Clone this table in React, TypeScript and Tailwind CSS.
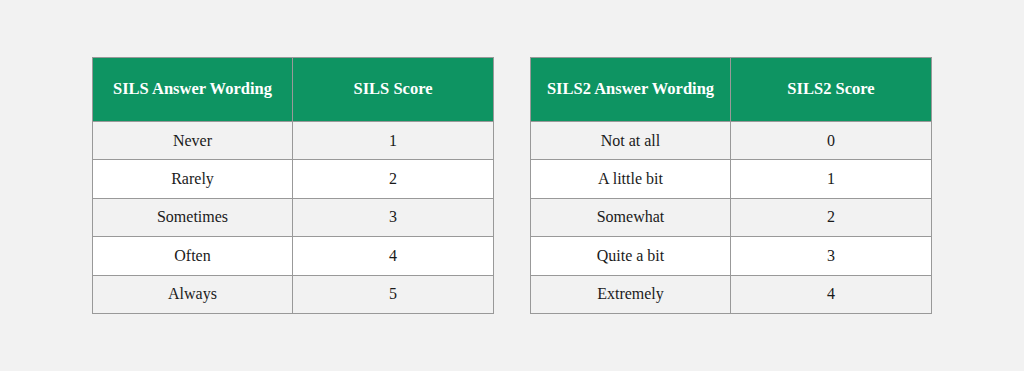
const TABLES = [
  {
    head: ["SILS Answer Wording", "SILS Score"],
    rows: [
      ["Never", "1"],
      ["Rarely", "2"],
      ["Sometimes", "3"],
      ["Often", "4"],
      ["Always", "5"],
    ],
  },
  {
    head: ["SILS2 Answer Wording", "SILS2 Score"],
    rows: [
      ["Not at all", "0"],
      ["A little bit", "1"],
      ["Somewhat", "2"],
      ["Quite a bit", "3"],
      ["Extremely", "4"],
    ],
  },
]

function ScoreTable({ head, rows }: { head: string[]; rows: string[][] }) {
  return (
    <table className="w-[401px] border-collapse table-fixed">
      <colgroup>
        <col className="w-[200px]" />
        <col className="w-[201px]" />
      </colgroup>
      <thead>
        <tr className="h-[64px] bg-[#0e9462]">
          {head.map(h => (
            <th key={h} className="border border-[#999999] text-white font-bold text-[16.5px] text-center">
              {h}
            </th>
          ))}
        </tr>
      </thead>
      <tbody>
        {rows.map((r, i) => (
          <tr key={r[0]} className={`h-[38.4px] ${i % 2 === 0 ? "bg-[#f2f2f2]" : "bg-white"}`}>
            {r.map((c, j) => (
              <td key={j} className="border border-[#999999] text-[#1a1a1a] text-[16px] text-center p-0">
                {c}
              </td>
            ))}
          </tr>
        ))}
      </tbody>
    </table>
  )
}

export default function App() {
  return (
    <div
      className="w-[1024px] h-[371px] bg-[#f2f2f2] flex items-center justify-center gap-[36px]"
      style={{ fontFamily: '"Liberation Serif", "DejaVu Serif", serif' }}
    >
      {TABLES.map(t => (
        <ScoreTable key={t.head[0]} head={t.head} rows={t.rows} />
      ))}
    </div>
  )
}
